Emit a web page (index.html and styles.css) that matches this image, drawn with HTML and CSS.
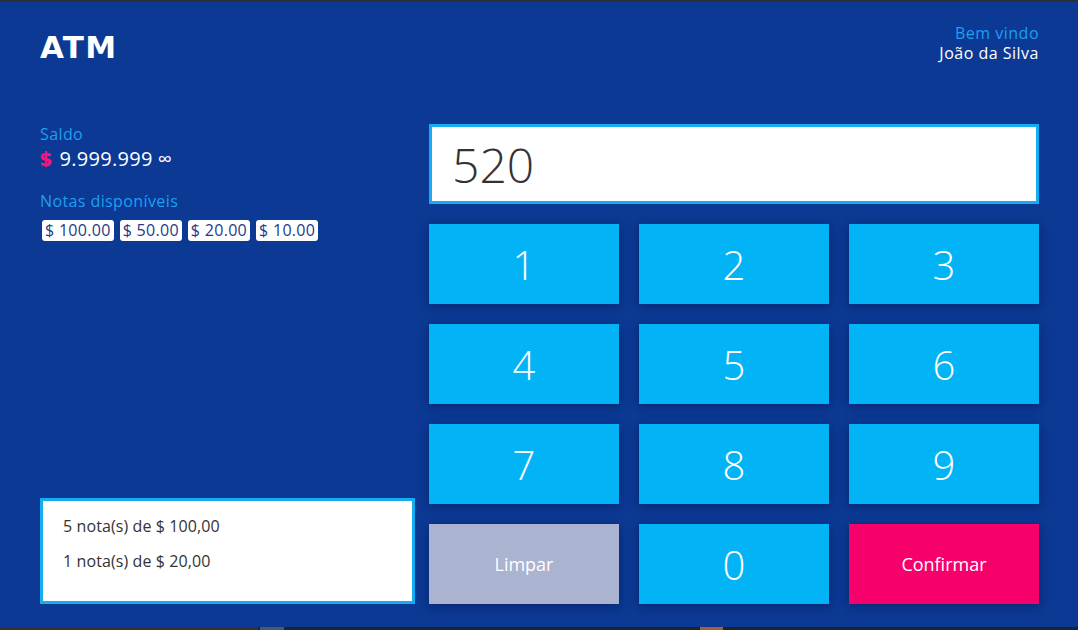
FILE: index.html
```html
<!DOCTYPE html>
<html lang="pt-BR">
<head>
<meta charset="utf-8">
<title>ATM</title>
<link rel="stylesheet" href="styles.css">
</head>
<body>
<div class="screen">
  <header class="topbar">
    <h1 class="logo">ATM</h1>
    <div class="user">
      <span class="welcome">Bem vindo</span>
      <span class="name">João da Silva</span>
    </div>
  </header>
  <main class="main">
    <section class="info">
      <div class="account">
        <div class="label">Saldo</div>
        <div class="balance"><span class="cur">$</span><span class="amount">9.999.999</span><span class="inf">∞</span></div>
        <div class="label notes-label">Notas disponíveis</div>
        <div class="chips">
          <span class="chip">$ 100.00</span>
          <span class="chip">$ 50.00</span>
          <span class="chip">$ 20.00</span>
          <span class="chip">$ 10.00</span>
        </div>
      </div>
      <div class="result">
        <p class="result-line">5 nota(s) de $ 100,00</p>
        <p class="result-line">1 nota(s) de $ 20,00</p>
      </div>
    </section>
    <section class="pad">
      <div class="display">520</div>
      <div class="keys">
        <button class="key">1</button>
        <button class="key">2</button>
        <button class="key">3</button>
        <button class="key">4</button>
        <button class="key">5</button>
        <button class="key">6</button>
        <button class="key">7</button>
        <button class="key">8</button>
        <button class="key">9</button>
        <button class="key key-text key-clear">Limpar</button>
        <button class="key">0</button>
        <button class="key key-text key-confirm">Confirmar</button>
      </div>
    </section>
  </main>
  <div class="taskbar">
    <span class="tb tb1"></span><span class="tb tb2"></span><span class="tb tb3"></span><span class="tb tb4"></span><span class="tb tb5"></span>
  </div>
</div>
</body>
</html>
```
FILE: styles.css
```css
* { box-sizing: border-box; }
html, body { margin: 0; padding: 0; }
body {
  background: #0b3994;
  font-family: "Open Sans", "DejaVu Sans", sans-serif;
  color: #fff;
}
.screen {
  width: 1078px;
  height: 630px;
  display: flex;
  flex-direction: column;
  border-top: 2px solid #2e2e33;
  background: #0b3994;
  overflow: hidden;
}
.topbar {
  height: 122px;
  flex: none;
  display: flex;
  justify-content: space-between;
  align-items: flex-start;
  padding: 21px 39px 0 40px;
}
.logo {
  margin: 6px 0 0;
  font-family: "DejaVu Sans", sans-serif;
  font-weight: 700;
  font-size: 31px;
  line-height: 36px;
  letter-spacing: 1.2px;
}
.user {
  display: flex;
  flex-direction: column;
  align-items: flex-end;
  font-size: 16px;
  line-height: 20px;
  letter-spacing: 0.5px;
}
.welcome { color: #1f9ff2; }
.name { color: #fff; }
.main {
  flex: none;
  height: 480px;
  display: flex;
  gap: 14px;
  padding: 0 39px 0 40px;
}
.info {
  width: 375px;
  flex: none;
  display: flex;
  flex-direction: column;
  justify-content: space-between;
}
.label {
  color: #1f9ff2;
  font-size: 16px;
  line-height: 20px;
  letter-spacing: 0.4px;
}
.balance {
  margin-top: 2px;
  display: flex;
  align-items: baseline;
  line-height: 26px;
}
.cur {
  color: #f5157a;
  font-weight: 800;
  font-size: 20px;
  margin-right: 8px;
}
.amount {
  font-size: 20px;
  font-weight: 400;
  letter-spacing: 0.3px;
}
.inf { font-size: 20px; margin-left: 5px; }
.notes-label {
  margin-top: 19px;
}
.chips {
  display: flex;
  gap: 6px;
  margin: 9px 0 0 2px;
}
.chip {
  background: #fff;
  color: #1f3a8a;
  border-radius: 3px;
  font-size: 16px;
  line-height: 21px;
  padding: 0 3px;
  letter-spacing: 0.3px;
}
.result {
  height: 106px;
  background: #fff;
  border: 3px solid #16acef;
  padding: 14px 20px;
}
.result-line {
  margin: 0 0 13px;
  color: #333;
  font-size: 16px;
  line-height: 22px;
  letter-spacing: 0.1px;
}
.pad {
  width: 610px;
  flex: none;
  display: flex;
  flex-direction: column;
  gap: 20px;
}
.display {
  height: 80px;
  background: #fff;
  border: 3px solid #16acef;
  padding-left: 20px;
  display: flex;
  align-items: center;
  color: #333;
  font-size: 48px;
  font-weight: 300;
}
.keys {
  display: grid;
  grid-template-columns: repeat(3, 190px);
  grid-auto-rows: 80px;
  gap: 20px;
}
.key {
  border: none;
  margin: 0;
  padding: 0;
  background: #02b4f5;
  color: #fff;
  font-family: "Open Sans", sans-serif;
  font-size: 40px;
  font-weight: 300;
  box-shadow: 0 2px 10px rgba(0, 0, 40, 0.35);
  cursor: pointer;
}
.key-text {
  font-size: 18px;
  font-weight: 400;
}
.key-clear { background: #aab3d0; }
.key-confirm { background: #f6006b; }
.taskbar {
  margin-top: auto;
  height: 3px;
  display: flex;
  background: #17262f;
}
.tb { height: 3px; }
.tb1 { width: 258px; background: #333; }
.tb2 { width: 2px; background: #17262f; }
.tb3 { width: 24px; background: #4a5a66; }
.tb4 { width: 416px; background: #17262f; }
.tb5 { width: 23px; background: #a0603a; }
```
